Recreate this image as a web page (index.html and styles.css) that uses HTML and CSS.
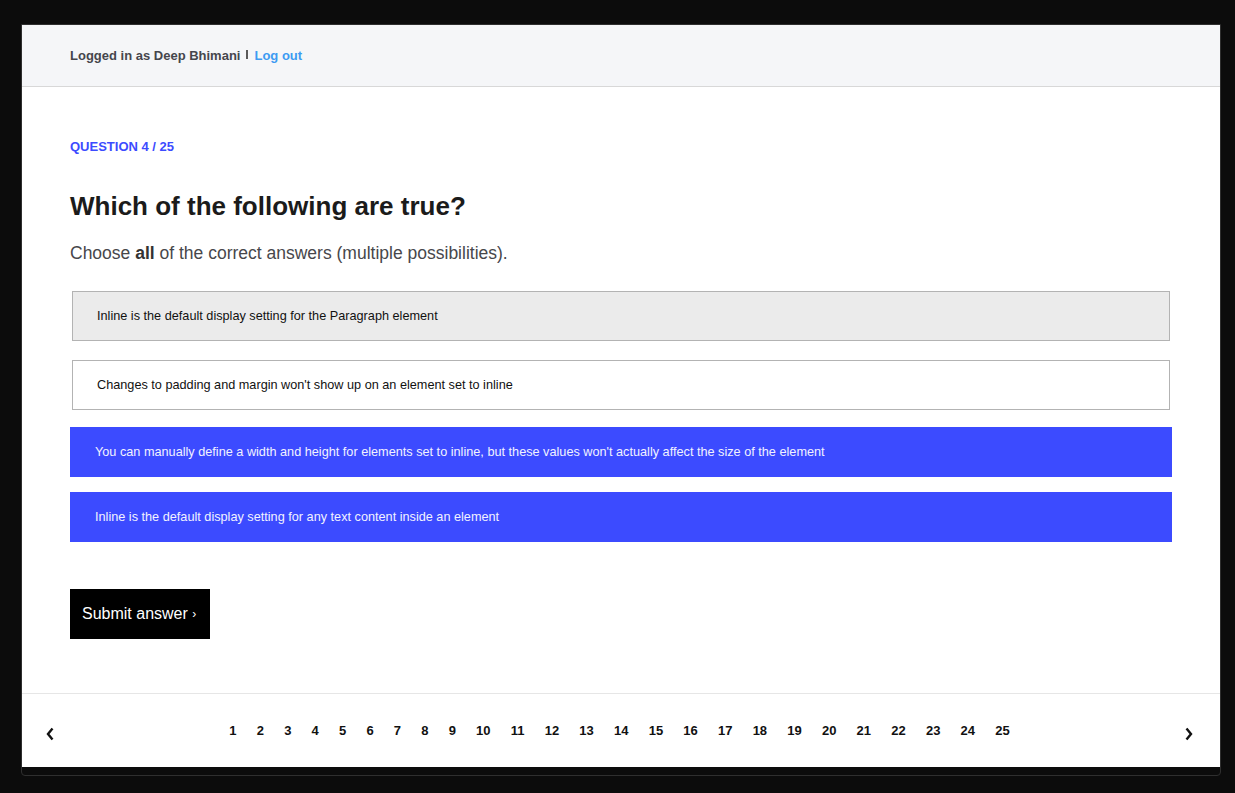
FILE: index.html
```html
<!DOCTYPE html>
<html lang="en">
<head>
<meta charset="utf-8">
<title>Quiz</title>
<link rel="stylesheet" href="styles.css">
</head>
<body>
<div class="window">
  <div class="app">
    <header class="topbar">
      <span class="user">Logged in as Deep Bhimani</span>
      <span class="sep"></span>
      <a class="logout" href="#">Log out</a>
    </header>
    <main class="content">
      <div class="counter">QUESTION 4 / 25</div>
      <h1 class="title">Which of the following are true?</h1>
      <p class="hint">Choose <b>all</b> of the correct answers (multiple possibilities).</p>
      <div class="options">
        <div class="option hover">Inline is the default display setting for the Paragraph element</div>
        <div class="option">Changes to padding and margin won't show up on an element set to inline</div>
        <div class="option selected">You can manually define a width and height for elements set to inline, but these values won't actually affect the size of the element</div>
        <div class="option selected">Inline is the default display setting for any text content inside an element</div>
      </div>
      <button class="submit">Submit answer <span class="chev">›</span></button>
    </main>
    <footer class="pager">
      <span class="arrow"><svg width="8" height="14" viewBox="0 0 8 14"><path d="M6.5 1.5 L2 7 L6.5 12.5" fill="none" stroke="#111" stroke-width="2.4"/></svg></span>
      <div class="pages">
        <span>1</span><span>2</span><span>3</span><span>4</span><span>5</span><span>6</span><span>7</span><span>8</span><span>9</span><span>10</span><span>11</span><span>12</span><span>13</span><span>14</span><span>15</span><span>16</span><span>17</span><span>18</span><span>19</span><span>20</span><span>21</span><span>22</span><span>23</span><span>24</span><span>25</span>
      </div>
      <span class="arrow"><svg width="8" height="14" viewBox="0 0 8 14"><path d="M1.5 1.5 L6 7 L1.5 12.5" fill="none" stroke="#111" stroke-width="2.4"/></svg></span>
    </footer>
  </div>
</div>
</body>
</html>
```

FILE: styles.css
```css
html, body {
  margin: 0;
  padding: 0;
  background: #0c0c0c;
  font-family: "Liberation Sans", Arial, sans-serif;
}
body {
  padding: 24px 14px 17px 21px;
}
.window {
  width: 1198px;
  border: 1px solid #2f2f2f;
  border-radius: 0 0 4px 4px;
  padding-bottom: 8px;
  background: #0c0c0c;
}
.app {
  background: #fff;
}
.topbar {
  height: 61px;
  background: #f5f6f8;
  border-bottom: 1px solid #d8d8d8;
  display: flex;
  align-items: center;
  padding-left: 48px;
  font-size: 13px;
  font-weight: bold;
}
.user {
  color: #45464c;
}
.sep {
  width: 2px;
  height: 9px;
  background: #5a5a5a;
  margin: 0 6px 2px 6px;
}
.logout {
  color: #3d9bf2;
  text-decoration: none;
}
.content {
  padding: 53px 48px 54px 48px;
}
.counter {
  color: #3c4bff;
  font-size: 13px;
  font-weight: bold;
  line-height: 14px;
}
.title {
  margin: 36px 0 0 0;
  font-size: 26px;
  line-height: 32px;
  color: #1b1b1b;
}
.hint {
  margin: 21px 0 0 0;
  font-size: 17.5px;
  line-height: 20px;
  color: #47474b;
}
.hint b {
  color: #333;
}
.options {
  margin-top: 26px;
  display: flex;
  flex-direction: column;
  gap: 15px;
}
.option {
  height: 50px;
  box-sizing: border-box;
  display: flex;
  align-items: center;
  padding-left: 25px;
  font-size: 12.7px;
  color: #111;
}
.option:not(.selected) {
  margin: 2px;
  border: 1px solid #b3b3b3;
  background: #fff;
  padding-left: 24px;
}
.option.hover {
  background: #ebebeb;
}
.option.selected {
  background: #3c4bff;
  color: #f2f2ff;
}
.submit {
  margin-top: 47px;
  height: 50px;
  width: 140px;
  background: #000;
  color: #fff;
  border: none;
  font-family: "Liberation Sans", Arial, sans-serif;
  font-size: 16px;
  text-align: left;
  padding: 0 12px;
  display: block;
}
.chev {
  font-size: 12px;
  position: relative;
  top: -1px;
}
.pager {
  border-top: 1px solid #e6e6e6;
  height: 73px;
  display: flex;
  align-items: center;
  justify-content: space-between;
  padding: 0 27px 0 24px;
}
.arrow {
  display: flex;
  margin-top: 7px;
}
.pages {
  display: flex;
  gap: 20.2px;
  font-size: 13px;
  font-weight: bold;
  color: #111;
}
```
